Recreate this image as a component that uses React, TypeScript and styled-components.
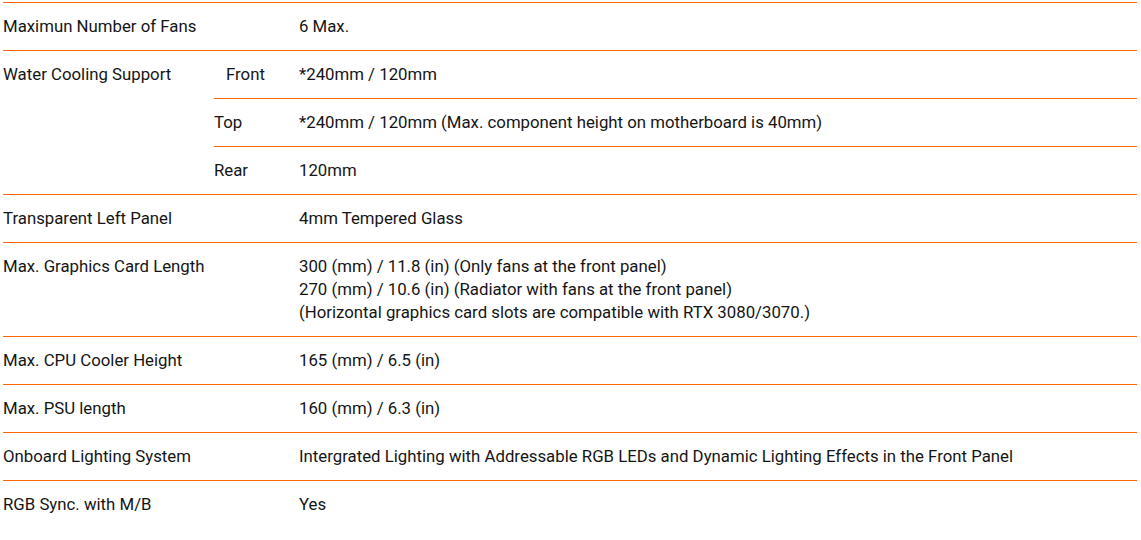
import React from "react";
import styled, { createGlobalStyle } from "styled-components";

const Global = createGlobalStyle`
  html, body { margin: 0; padding: 0; background: #fff; }
  body { font-family: Roboto, "Liberation Sans", sans-serif; }
`;

const Table = styled.div`
  margin: 2px 4px 0 3px;
  display: flex;
  flex-direction: column;
  color: #151515;
  font-size: 16.8px;
  line-height: 23px;
`;

const Row = styled.div`
  display: grid;
  grid-template-columns: 211px 1fr;
  border-top: 1px solid #ff6600;
`;

const Label = styled.div`
  padding: 12px 0;
  white-space: nowrap;
`;

const Value = styled.div`
  padding: 12px 0 12px 85px;
  white-space: nowrap;
`;

const SubList = styled.div`
  display: flex;
  flex-direction: column;
`;

const SubRow = styled.div<{ $first?: boolean }>`
  display: grid;
  grid-template-columns: 85px 1fr;
  border-top: ${(p) => (p.$first ? "none" : "1px solid #ff6600")};
`;

const SubLabel = styled.div<{ $indent?: boolean }>`
  padding: 12px 0 12px ${(p) => (p.$indent ? "12px" : "0")};
`;

const SubValue = styled.div`
  padding: 12px 0;
  white-space: nowrap;
`;

type Spec = { label: string; value?: string[]; subs?: { k: string; v: string; indent?: boolean }[] };

const specs: Spec[] = [
  { label: "Maximun Number of Fans", value: ["6 Max."] },
  {
    label: "Water Cooling Support",
    subs: [
      { k: "Front", v: "*240mm / 120mm", indent: true },
      { k: "Top", v: "*240mm / 120mm (Max. component height on motherboard is 40mm)" },
      { k: "Rear", v: "120mm" },
    ],
  },
  { label: "Transparent Left Panel", value: ["4mm Tempered Glass"] },
  {
    label: "Max. Graphics Card Length",
    value: [
      "300 (mm) / 11.8 (in) (Only fans at the front panel)",
      "270 (mm) / 10.6 (in) (Radiator with fans at the front panel)",
      "(Horizontal graphics card slots are compatible with RTX 3080/3070.)",
    ],
  },
  { label: "Max. CPU Cooler Height", value: ["165 (mm) / 6.5 (in)"] },
  { label: "Max. PSU length", value: ["160 (mm) / 6.3 (in)"] },
  {
    label: "Onboard Lighting System",
    value: ["Intergrated Lighting with Addressable RGB LEDs and Dynamic Lighting Effects in the Front Panel"],
  },
  { label: "RGB Sync. with M/B", value: ["Yes"] },
];

export default function App() {
  return (
    <>
      <Global />
      <Table>
        {specs.map((s) => (
          <Row key={s.label}>
            <Label>{s.label}</Label>
            {s.subs ? (
              <SubList>
                {s.subs.map((sub, i) => (
                  <SubRow key={sub.k} $first={i === 0}>
                    <SubLabel $indent={sub.indent}>{sub.k}</SubLabel>
                    <SubValue>{sub.v}</SubValue>
                  </SubRow>
                ))}
              </SubList>
            ) : (
              <Value>
                {s.value!.map((line, i) => (
                  <div key={i}>{line}</div>
                ))}
              </Value>
            )}
          </Row>
        ))}
      </Table>
    </>
  );
}
